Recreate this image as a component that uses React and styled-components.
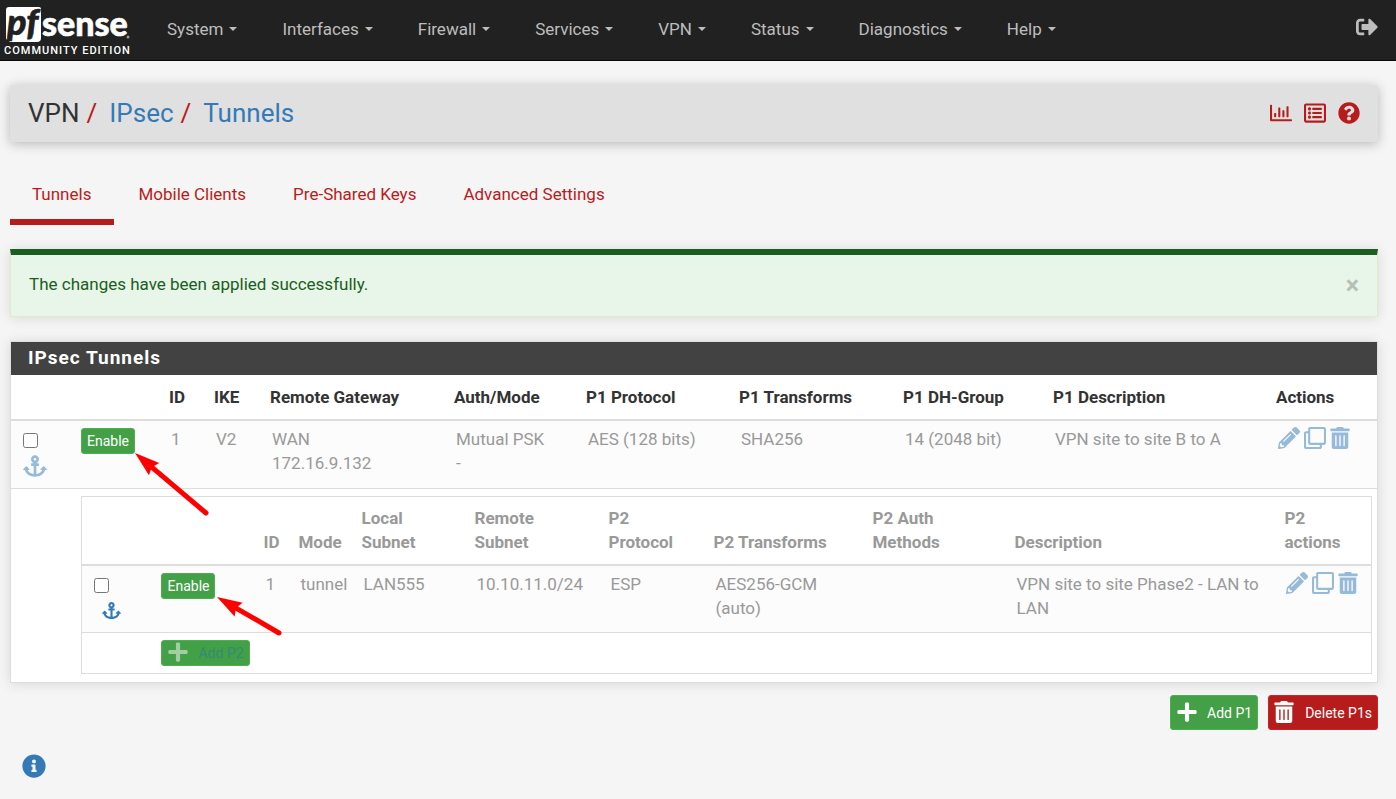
import React from 'react';
import styled, { createGlobalStyle } from 'styled-components';
import {
  FaSignOutAlt, FaRegChartBar, FaRegListAlt, FaQuestionCircle, FaAnchor,
  FaPencilAlt, FaRegClone, FaTrashAlt, FaPlus, FaInfoCircle,
} from 'react-icons/fa';

const Global = createGlobalStyle`
  *, *::before, *::after { box-sizing: border-box; }
  body {
    margin: 0;
    background: #f5f5f5;
    color: #333;
    font-family: Roboto, "Liberation Sans", sans-serif;
    font-size: 17px;
    line-height: 24px;
  }
  a { color: #337ab7; text-decoration: none; }
  svg { display: block; }
`;

const NavBar = styled.header`
  display: flex;
  align-items: stretch;
  min-height: 61px;
  background: #212121;
  border-bottom: 1px solid #080808;
`;

const Brand = styled.a`
  width: 142px;
  padding: 6px 0 0 4px;
  color: #fff;
  font-size: 11px;
  font-weight: 500;
  line-height: 14px;
  letter-spacing: 1px;
  white-space: nowrap;
  svg { margin-bottom: 2px; overflow: visible; }
`;

const Menu = styled.nav`
  display: flex;
  flex: 1;
  align-items: center;
  padding: 0 0 2px 2px;
`;

const MenuItem = styled.a`
  display: flex;
  align-items: center;
  gap: 6px;
  padding: 0 22px 0 23px;
  color: #bdbdbd;
  white-space: nowrap;
  &::after {
    content: "";
    border: 4px solid transparent;
    border-top-color: currentColor;
    border-bottom: 0;
  }
`;

const LogoutLink = styled.a`
  display: flex;
  align-items: center;
  padding: 0 18px 6px;
  color: #bdbdbd;
  font-size: 22px;
`;

const Page = styled.main`
  padding: 24px 18px 20px 10px;
`;

const Heading = styled.div`
  display: flex;
  justify-content: space-between;
  align-items: center;
  height: 57px;
  padding: 0 18px 2px;
  background: #e0e0e0;
  border-radius: 2px;
  box-shadow: 0 2px 12px rgba(0, 0, 0, 0.25);
`;

const Crumbs = styled.h1`
  display: flex;
  gap: 7px;
  margin: 0;
  font-size: 26px;
  font-weight: 400;
  line-height: 32px;
`;

const Slash = styled.span`
  margin-right: 5px;
  color: #b71c1c;
`;

const HeadingIcons = styled.div`
  display: flex;
  gap: 12px;
  font-size: 22px;
  a { color: #b71c1c; }
`;

const Tabs = styled.nav`
  display: flex;
  margin: 28px 0 24px;
`;

const Tab = styled.a`
  padding: 12px 23px 13px 24px;
  color: #b71c1c;
  border-bottom: 6px solid ${(p) => (p.$active ? '#b71c1c' : 'transparent')};
  &:first-child { padding-left: 22px; }
`;

const Alert = styled.div`
  display: flex;
  justify-content: space-between;
  margin-bottom: 24px;
  padding: 17px 18px 20px;
  color: #1b5e20;
  background: #e8f5e9;
  border: 1px solid #dcedc8;
  border-top: 6px solid #1b5e20;
  box-shadow: 0 1px 12px rgba(0, 0, 0, 0.12);
`;

const CloseButton = styled.button`
  height: 24px;
  padding: 2px 0 0;
  border: 0;
  background: none;
  color: #b5bfb6;
  font: 700 25px/24px Roboto, sans-serif;
`;

const Panel = styled.section`
  background: #fff;
  border: 1px solid #ddd;
  box-shadow: 0 1px 12px rgba(0, 0, 0, 0.12);
`;

const PanelTitle = styled.h2`
  margin: 0;
  padding: 4px 17px 5px;
  background: #424242;
  color: #fff;
  font-size: 19px;
  font-weight: 700;
  line-height: 24px;
  letter-spacing: 1px;
`;

const Table = styled.table`
  width: 100%;
  border-collapse: collapse;
  table-layout: fixed;
  th {
    padding: 10px 6px;
    border-bottom: 2px solid #ddd;
    font-weight: 700;
    text-align: left;
    vertical-align: bottom;
  }
  td {
    padding: 6px 6px 13px 8px;
    border-bottom: 1px solid #ddd;
    vertical-align: top;
  }
`;

const DimRow = styled.tr`
  background: #fcfcfc;
  color: #999;
`;

const PhaseTwoRow = styled.tr`
  > td {
    padding: 7px 5px 8px 0;
    border-bottom: 0;
  }
`;

const PhaseTwoTable = styled(Table)`
  border: 1px solid #ddd;
  th { padding: 9px 20px 10px 6px; color: #999; }
  td { padding-bottom: 12px; }
  tr:last-child td { padding-bottom: 7px; border-bottom: 0; }
`;

const SelectCell = styled.td`
  && { padding: 12px 0 0 ${(p) => p.$inset}px; }
  input { display: block; width: 15px; height: 15px; margin: 0; }
  a {
    display: block;
    width: max-content;
    margin: ${(p) => (p.$small ? '8px 0 0 8px' : '6px 0 0 0')};
    font-size: ${(p) => (p.$small ? 19 : 24)}px;
    opacity: ${(p) => (p.$small ? 1 : 0.5)};
  }
`;

const ButtonCell = styled.td`
  && { padding-top: 7px; padding-left: 0; }
`;

const ActionIcons = styled.div`
  display: flex;
  gap: 4px;
  font-size: 22px;
  opacity: 0.5;
  a:last-child svg { width: 20px; }
`;

const Button = styled.button`
  display: inline-flex;
  align-items: center;
  gap: ${(p) => (p.$danger ? 11 : 9)}px;
  height: ${(p) => (p.$large ? 35 : 26)}px;
  padding: 0 5px;
  border: 1px solid ${(p) => (p.$danger ? '#c62828' : '#4caf50')};
  border-radius: 3px;
  background: ${(p) => (p.$danger ? '#b71c1c' : '#43a047')};
  color: #fff;
  font: 400 14px/20px Roboto, sans-serif;
  white-space: nowrap;
  vertical-align: top;
  svg {
    width: ${(p) => (p.$danger ? 20 : 22)}px;
    margin-bottom: 2px;
    font-size: 22px;
  }
`;

const FadedButton = styled(Button)`
  color: #338a76;
  svg { color: #a1cfa3; }
`;

const Footer = styled.div`
  display: flex;
  justify-content: flex-end;
  gap: 10px;
  margin: 12px 0 24px;
`;

const InfoLink = styled.a`
  display: block;
  width: max-content;
  margin-left: 12px;
  font-size: 24px;
`;

const Canvas = styled.div`
  position: relative;
`;

const Pointer = styled.svg`
  position: absolute;
  left: ${(p) => p.$x}px;
  top: ${(p) => p.$y}px;
  overflow: visible;
  pointer-events: none;
`;

const Logo = () => (
  <svg width="128" height="36" viewBox="0 0 128 36" role="img" aria-label="pfSense">
    <path d="M5 1H35Q37 1 37 3V32Q37 36 33 36H6L2 33V4Q2 1 5 1Z" fill="#fff" />
    <text x="3" y="29" fill="#212121" stroke="#212121" strokeWidth="0.6" fontFamily="Lato, sans-serif" fontWeight="900" fontStyle="italic" fontSize="36" letterSpacing="0">pf</text>
    <text x="38" y="30" fill="#fff" stroke="#fff" strokeWidth="0.6" fontFamily="Lato, sans-serif" fontWeight="900" fontSize="34" letterSpacing="0">sense</text>
    <circle cx="124" cy="31" r="1.5" fill="#999" />
  </svg>
);

const menus = ['System', 'Interfaces', 'Firewall', 'Services', 'VPN', 'Status', 'Diagnostics', 'Help'];
const tabs = ['Tunnels', 'Mobile Clients', 'Pre-Shared Keys', 'Advanced Settings'];

const phaseOneColumns = [
  ['', 70], ['', 82], ['ID', 45], ['IKE', 56], ['Remote Gateway', 184], ['Auth/Mode', 132], ['P1 Protocol', 153],
  ['P1 Transforms', 164], ['P1 DH-Group', 150], ['P1 Description', 223], ['Actions', 107],
];
const phaseTwoColumns = [
  ['', 80], ['', 96], ['ID', 35], ['Mode', 63], ['Local Subnet', 113], ['Remote Subnet', 134], ['P2 Protocol', 105],
  ['P2 Transforms', 159], ['P2 Auth Methods', 142], ['Description', 270], ['P2 actions', 93],
];

const Columns = ({ columns }) => {
  const total = columns.reduce((sum, [, width]) => sum + width, 0);
  return (
    <colgroup>
      {columns.map(([name, width], i) => (
        <col key={name + i} style={{ width: `${(width / total) * 100}%` }} />
      ))}
    </colgroup>
  );
};

const HeadRow = ({ columns }) => (
  <thead>
    <tr>{columns.map(([name], i) => <th key={name + i} scope="col">{name}</th>)}</tr>
  </thead>
);

const Actions = () => (
  <ActionIcons>
    <a href="#edit" aria-label="Edit"><FaPencilAlt /></a>
    <a href="#copy" aria-label="Copy"><FaRegClone /></a>
    <a href="#delete" aria-label="Delete"><FaTrashAlt /></a>
  </ActionIcons>
);

const Arrow = ({ x, y, dx, dy }) => {
  const angle = (Math.atan2(dy, dx) * 180) / Math.PI;
  const length = Math.hypot(dx, dy);
  return (
    <Pointer $x={x} $y={y} width="1" height="1" aria-hidden="true">
      <g transform={`rotate(${angle})`} fill="red" stroke="none">
        <path d="M0 0L25 -8L22 0L25 8Z" />
        <path d={`M20 0H${length}`} stroke="red" strokeWidth="5" strokeLinecap="round" />
      </g>
    </Pointer>
  );
};

const PhaseTwo = () => (
  <PhaseTwoTable>
    <Columns columns={phaseTwoColumns} />
    <HeadRow columns={phaseTwoColumns} />
    <tbody>
      <DimRow>
        <SelectCell $inset={12} $small>
          <input type="checkbox" aria-label="Select phase 2 entry 1" />
          <a href="#move-p2" aria-label="Move selected phase 2 entries"><FaAnchor /></a>
        </SelectCell>
        <ButtonCell><Button type="button">Enable</Button></ButtonCell>
        <td>1</td>
        <td>tunnel</td>
        <td>LAN555</td>
        <td>10.10.11.0/24</td>
        <td>ESP</td>
        <td>AES256-GCM<br />(auto)</td>
        <td />
        <td>VPN site to site Phase2 - LAN to LAN</td>
        <td><Actions /></td>
      </DimRow>
      <tr>
        <td />
        <ButtonCell colSpan={10}>
          <FadedButton type="button"><FaPlus />Add P2</FadedButton>
        </ButtonCell>
      </tr>
    </tbody>
  </PhaseTwoTable>
);

export default function App() {
  return (
    <>
      <Global />
      <NavBar>
        <Brand href="#home"><Logo />COMMUNITY EDITION</Brand>
        <Menu>{menus.map((name) => <MenuItem key={name} href={`#${name}`}>{name}</MenuItem>)}</Menu>
        <LogoutLink href="#logout" aria-label="Log out"><FaSignOutAlt /></LogoutLink>
      </NavBar>
      <Page>
        <Heading>
          <Crumbs>
            <span>VPN</span><Slash>/</Slash>
            <a href="#ipsec">IPsec</a><Slash>/</Slash>
            <a href="#tunnels">Tunnels</a>
          </Crumbs>
          <HeadingIcons>
            <a href="#status" aria-label="Status"><FaRegChartBar /></a>
            <a href="#logs" aria-label="Logs"><FaRegListAlt /></a>
            <a href="#help" aria-label="Help"><FaQuestionCircle /></a>
          </HeadingIcons>
        </Heading>
        <Tabs>{tabs.map((name, i) => <Tab key={name} href={`#tab-${i}`} $active={i === 0}>{name}</Tab>)}</Tabs>
        <Alert role="status">
          <span>The changes have been applied successfully.</span>
          <CloseButton type="button" aria-label="Close">×</CloseButton>
        </Alert>
        <Canvas>
          <Panel>
            <PanelTitle>IPsec Tunnels</PanelTitle>
            <Table>
              <Columns columns={phaseOneColumns} />
              <HeadRow columns={phaseOneColumns} />
              <tbody>
                <DimRow>
                  <SelectCell $inset={12}>
                    <input type="checkbox" aria-label="Select phase 1 entry 1" />
                    <a href="#move-p1" aria-label="Move selected phase 1 entries"><FaAnchor /></a>
                  </SelectCell>
                  <ButtonCell><Button type="button">Enable</Button></ButtonCell>
                  <td>1</td>
                  <td>V2</td>
                  <td>WAN<br />172.16.9.132</td>
                  <td>Mutual PSK<br />-</td>
                  <td>AES (128 bits)</td>
                  <td>SHA256</td>
                  <td>14 (2048 bit)</td>
                  <td>VPN site to site B to A</td>
                  <td><Actions /></td>
                </DimRow>
                <PhaseTwoRow>
                  <td />
                  <td colSpan={10}><PhaseTwo /></td>
                </PhaseTwoRow>
              </tbody>
            </Table>
          </Panel>
          <Arrow x={125} y={112} dx={71} dy={60} />
          <Arrow x={207} y={256} dx={62} dy={36} />
        </Canvas>
        <Footer>
          <Button type="button" $large><FaPlus />Add P1</Button>
          <Button type="button" $large $danger><FaTrashAlt />Delete P1s</Button>
        </Footer>
        <InfoLink href="#info" aria-label="More information"><FaInfoCircle /></InfoLink>
      </Page>
    </>
  );
}
